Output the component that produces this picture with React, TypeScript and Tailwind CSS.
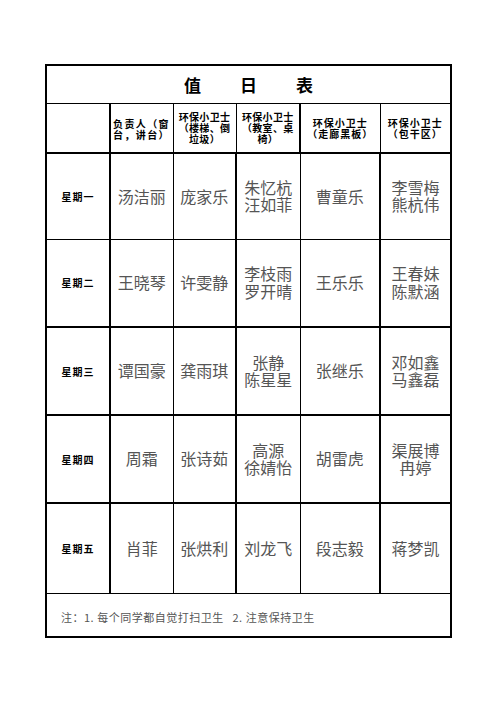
const rows = [
  { day: "星期一", names: ["汤洁丽", "庞家乐", "朱忆杭\n汪如菲", "曹童乐", "李雪梅\n熊杭伟"], h: "h-[86px]", b: "border-b" },
  { day: "星期二", names: ["王晓琴", "许雯静", "李枝雨\n罗开晴", "王乐乐", "王春妹\n陈默涵"], h: "h-[88px]", b: "border-b-2" },
  { day: "星期三", names: ["谭国豪", "龚雨琪", "张静\n陈星星", "张继乐", "邓如鑫\n马鑫磊"], h: "h-[88px]", b: "border-b-2" },
  { day: "星期四", names: ["周霜", "张诗茹", "高源\n徐婧怡", "胡雷虎", "渠展博\n冉婷"], h: "h-[88px]", b: "border-b-2" },
  { day: "星期五", names: ["肖菲", "张烘利", "刘龙飞", "段志毅", "蒋梦凯"], h: "h-[90px]", b: "border-b" },
]

const headers = [
  { text: "环保小卫士\n（楼梯、倒\n垃圾）", size: "tracking-[0.3px]" },
  { text: "环保小卫士\n（教室、桌\n椅）", size: "tracking-[0.3px]" },
  { text: "环保小卫士\n（走廊黑板）", size: "tracking-[1px]" },
  { text: "环保小卫士\n（包干区）", size: "tracking-[1px]" },
]

// thick rule after column 1 and column 4
const colRight = ["border-r", "border-r", "border-r-2", "border-r", "border-r-2"]

export default function App() {
  return (
    <div className="min-h-[702px] w-[496px] bg-white pt-[64px] pl-[45px]">
      <table
        className="w-[405px] table-fixed border-collapse border-2 border-black"
        style={{ fontFamily: '"Noto Sans CJK SC", "Noto Sans", sans-serif' }}
      >
        <colgroup>
          <col className="w-[64px]" />
          <col className="w-[63px]" />
          <col className="w-[63px]" />
          <col className="w-[64px]" />
          <col className="w-[80px]" />
          <col className="w-[71px]" />
        </colgroup>
        <tbody>
          {/* Title */}
          <tr className="h-[38px]">
            <td colSpan={6} className="border-b border-black p-0">
              <div className="flex justify-center gap-[39px] text-[17px] font-bold leading-none text-black">
                <span>值</span>
                <span>日</span>
                <span>表</span>
              </div>
            </td>
          </tr>

          {/* Header */}
          <tr className="h-[50px]">
            <td className="border-r-2 border-b-2 border-black p-0" />
            <td className="whitespace-pre border-r border-b-2 border-black p-0 pl-[2px] pt-[3px] text-left text-[10px] font-bold leading-[11.5px] tracking-[1.4px] text-black">
              {"负责人（窗\n台，讲台）"}
            </td>
            {headers.map((h, i) => (
              <td
                key={i}
                className={`${i === 1 ? "border-r-2" : "border-r"} whitespace-pre border-b-2 border-black p-0 text-center text-[10px] font-bold leading-[11px] text-black ${h.size}`}
              >
                {h.text}
              </td>
            ))}
          </tr>

          {/* Days */}
          {rows.map((r) => (
            <tr key={r.day} className={r.h}>
              <td className={`${r.b} border-r-2 border-black p-0 text-center text-[10px] font-bold tracking-[1px] text-black`}>
                {r.day}
              </td>
              {r.names.map((n, i) => (
                <td
                  key={i}
                  className={`${r.b} ${colRight[i + 1] ?? "border-r"} whitespace-pre border-black p-0 text-center align-middle text-[16px] leading-[17.5px] text-[#555]`}
                >
                  {n}
                </td>
              ))}
            </tr>
          ))}

          {/* Footer */}
          <tr className="h-[44px]">
            <td colSpan={6} className="p-0 pl-[14px] text-left">
              <span className="whitespace-pre text-[11px] tracking-[0.5px] text-[#555]">
                注：1. 每个同学都自觉打扫卫生   2. 注意保持卫生
              </span>
            </td>
          </tr>
        </tbody>
      </table>
    </div>
  )
}
